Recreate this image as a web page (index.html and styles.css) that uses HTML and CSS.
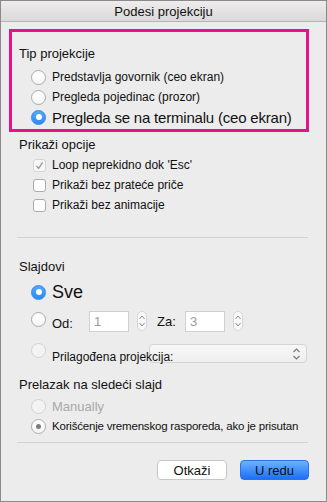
FILE: index.html
```html
<!DOCTYPE html>
<html lang="sr">
<head>
    <meta charset="UTF-8">
    <title>Podesi projekciju</title>
    <link rel="stylesheet" href="styles.css">
</head>
<body>
    <div class="prozor">
        <div class="naslov">Podesi projekciju</div>

        <div class="sadrzaj">
            <div class="istaknuto">
                <div class="oznaka">Tip projekcije</div>
                <div class="red">
                    <span class="radio"></span>
                    <span>Predstavlja govornik (ceo ekran)</span>
                </div>
                <div class="red">
                    <span class="radio"></span>
                    <span>Pregleda pojedinac (prozor)</span>
                </div>
                <div class="red veliki">
                    <span class="radio izabran"></span>
                    <span>Pregleda se na terminalu (ceo ekran)</span>
                </div>
            </div>

            <div class="oznaka opcije">Prikaži opcije</div>
            <div class="red cek prvi">
                <span class="polje sivo">
                    <svg width="9" height="9" viewBox="0 0 9 9"><path d="M1.5 5 L3.6 7.4 L7.6 1.4" fill="none" stroke="#9a9a9a" stroke-width="1.4"/></svg>
                </span>
                <span>Loop neprekidno dok 'Esc'</span>
            </div>
            <div class="red cek">
                <span class="polje"></span>
                <span>Prikaži bez prateće priče</span>
            </div>
            <div class="red cek">
                <span class="polje"></span>
                <span>Prikaži bez animacije</span>
            </div>

            <div class="linija prva-linija"></div>

            <div class="oznaka slajdovi">Slajdovi</div>
            <div class="red sve">
                <span class="radio izabran"></span>
                <span>Sve</span>
            </div>
            <div class="red od">
                <span class="radio"></span>
                <span class="od-tekst">Od:</span>
                <span class="unos">1</span>
                <span class="koraci">
                    <svg width="8" height="16" viewBox="0 0 8 16"><path d="M1.5 6 L4 3 L6.5 6 M1.5 10 L4 13 L6.5 10" fill="none" stroke="#8a8a8a" stroke-width="1"/></svg>
                </span>
                <span class="za-tekst">Za:</span>
                <span class="unos">3</span>
                <span class="koraci">
                    <svg width="8" height="16" viewBox="0 0 8 16"><path d="M1.5 6 L4 3 L6.5 6 M1.5 10 L4 13 L6.5 10" fill="none" stroke="#8a8a8a" stroke-width="1"/></svg>
                </span>
            </div>
            <div class="red prilagodjena">
                <span class="radio bledo"></span>
                <span class="prilagodjena-tekst">Prilagođena projekcija:</span>
                <span class="izbor">
                    <svg width="9" height="14" viewBox="0 0 9 14"><path d="M1.5 5 L4.5 2 L7.5 5 M1.5 9 L4.5 12 L7.5 9" fill="none" stroke="#777" stroke-width="1.1"/></svg>
                </span>
            </div>

            <div class="oznaka prelazak">Prelazak na sledeći slajd</div>
            <div class="red">
                <span class="radio bledo"></span>
                <span class="sivi-tekst">Manually</span>
            </div>
            <div class="red">
                <span class="radio tacka"></span>
                <span class="uzak">Korišćenje vremenskog rasporeda, ako je prisutan</span>
            </div>

            <div class="linija druga-linija"></div>

            <div class="dugmad">
                <button class="dugme">Otkaži</button>
                <button class="dugme plavo">U redu</button>
            </div>
        </div>
    </div>
</body>
</html>
```

FILE: styles.css
```css
/* Osnova */
body, html {
margin: 0;
padding: 0;
background: #ececec;
}

.prozor {
width: 327px;
height: 502px;
box-sizing: border-box;
border: 1px solid #8a8a8a;
background: #ececec;
font-family: "Liberation Sans", Arial, sans-serif;
color: #111;
}

/* Naslovna traka */
.naslov {
height: 20px;
line-height: 21px;
text-align: center;
font-size: 13px;
background: linear-gradient(#eeecec, #dad8d8);
border-bottom: 1px solid #b4b4b4;
}

.sadrzaj {
padding: 0 18px;
display: flex;
flex-direction: column;
}

/* Ružičasti okvir */
.istaknuto {
margin: 7px -1px 0 -10px;
height: 103px;
box-sizing: border-box;
border: 3px solid #e8118a;
padding: 14px 0 0 7px;
}

.oznaka {
font-size: 13px;
line-height: 16px;
height: 16px;
white-space: nowrap;
}

.istaknuto .oznaka {
margin-bottom: 5px;
}

/* Redovi sa radio dugmadima i poljima */
.red {
display: flex;
align-items: center;
gap: 6px;
height: 20px;
font-size: 12px;
padding-left: 12px;
white-space: nowrap;
}

.red.veliki {
font-size: 15px;
letter-spacing: -0.2px;
}

.uzak {
font-size: 11.5px;
letter-spacing: -0.2px;
}

.radio {
width: 15px;
height: 15px;
box-sizing: border-box;
border-radius: 50%;
border: 1px solid #ababab;
background: linear-gradient(#ffffff, #f6f6f6);
display: flex;
align-items: center;
justify-content: center;
flex: none;
}

.radio.izabran {
border-color: #2f86f0;
background: linear-gradient(#55a8fd, #2b8bf6);
}

.radio.izabran::after {
content: "";
width: 6px;
height: 6px;
border-radius: 50%;
background: #fff;
}

.radio.bledo {
border-color: #d2d2d2;
background: #f3f3f3;
}

.radio.tacka::after {
content: "";
width: 5px;
height: 5px;
border-radius: 50%;
background: #7c7c7c;
}

.sivi-tekst {
color: #a9a9a9;
font-size: 13px;
}

/* Polja za potvrdu */
.opcije {
margin-top: 5px;
}

.red.cek {
padding-left: 14px;
}

.red.cek.prvi {
margin-top: 2px;
}

.polje {
width: 13px;
height: 13px;
box-sizing: border-box;
border: 1px solid #ababab;
border-radius: 3px;
background: #fff;
display: flex;
align-items: center;
justify-content: center;
flex: none;
}

.polje.sivo {
border-color: #d4d4d4;
background: #f7f7f7;
}

/* Razdelne linije */
.linija {
height: 1px;
background: #d3d3d3;
margin-left: -2px;
}

.prva-linija {
margin-top: 22px;
}

.druga-linija {
margin-top: 6px;
}

/* Slajdovi */
.slajdovi {
margin-top: 21px;
}

.red.sve {
height: 24px;
margin-top: 5px;
font-size: 18px;
}

.red.od {
height: 26px;
margin-top: 4px;
gap: 0;
}

.od .radio {
margin-top: -4px;
}

.od-tekst {
margin-left: 6px;
width: 37px;
font-size: 13px;
padding-top: 4px;
}

.unos {
width: 40px;
height: 21px;
box-sizing: border-box;
background: #fff;
border: 1px solid #d0d0d0;
color: #9a9a9a;
font-size: 13px;
line-height: 19px;
padding-left: 4px;
}

.koraci {
width: 10px;
height: 20px;
box-sizing: border-box;
margin-left: 8px;
border: 1px solid #d6d6d6;
border-radius: 5px;
background: #f9f9f9;
display: flex;
align-items: center;
justify-content: center;
}

.za-tekst {
margin-left: 10px;
width: 28px;
font-size: 13px;
}

.red.prilagodjena {
height: 22px;
margin-top: 9px;
gap: 0;
align-items: flex-start;
}

.prilagodjena-tekst {
position: relative;
z-index: 1;
margin-left: 6px;
padding-top: 7px;
font-size: 12px;
width: 97px;
}

.izbor {
width: 158px;
height: 19px;
box-sizing: border-box;
margin-top: 1px;
border: 1px solid #d4d4d4;
border-radius: 4px;
background: linear-gradient(#f7f7f7, #efefef);
display: flex;
align-items: center;
justify-content: flex-end;
padding-right: 5px;
}

/* Prelazak */
.prelazak {
margin-top: 12px;
margin-bottom: 3px;
}

/* Dugmad */
.dugmad {
display: flex;
justify-content: flex-end;
gap: 13px;
margin-top: 17px;
margin-right: -1px;
}

.dugme {
width: 70px;
height: 20px;
padding: 0;
font-family: "Liberation Sans", Arial, sans-serif;
font-size: 13px;
color: #111;
background: #fff;
border: 1px solid #c6c6c6;
border-radius: 4px;
}

.dugme.plavo {
width: 69px;
background: linear-gradient(#6cb3ff, #1b6ff7);
border-color: #2c72e6;
}
```
